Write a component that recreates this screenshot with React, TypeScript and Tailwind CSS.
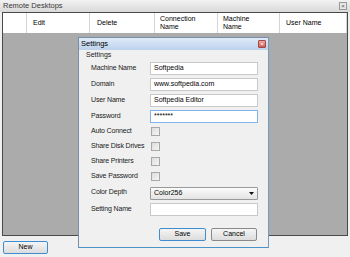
import React from "react";

const font = { fontFamily: '"Liberation Sans", Arial, sans-serif' };

function Input({ value, focused }: { value?: string; focused?: boolean }) {
  return (
    <div
      className={`w-[108px] h-[13px] bg-white border flex items-center px-[3px] text-[7px] text-black ${
        focused ? "border-[#7eb4ea]" : "border-[#c9c9c9]"
      }`}
    >
      {value}
    </div>
  );
}

function Check() {
  return (
    <div className="ml-[1px] w-[9px] h-[9px] border border-[#a8a8a8] bg-gradient-to-br from-[#dcdcdc] to-[#f6f6f6]" />
  );
}

function Row({
  label,
  h,
  children,
}: {
  label: string;
  h: string;
  children: React.ReactNode;
}) {
  return (
    <div className={`flex items-center ${h}`}>
      <div className="w-[71px] shrink-0 pl-[12px] text-[7px] tracking-[-0.15px] text-[#1a1a1a] whitespace-nowrap">
        {label}
      </div>
      {children}
    </div>
  );
}

export default function App() {
  return (
    <div className="relative w-[350px] h-[257px] bg-[#f0f0f0] overflow-hidden" style={font}>
      {/* Title bar */}
      <div className="h-[12px] flex items-center justify-between px-[3px] bg-gradient-to-b from-[#f2f2f2] to-[#d9d9d9]">
        <span className="text-[7.5px] text-[#3a3a3a]">Remote Desktops</span>
        <div className="w-[8px] h-[8px] border border-[#9a9a9a] bg-[#e6e6e6] flex items-center justify-center text-[6px] leading-none text-[#555]">
          ×
        </div>
      </div>
      {/* Grid */}
      <div className="mx-[2px] h-[224px] border border-[#4a4a4a] flex flex-col">
        <div className="h-[20px] bg-white flex text-[7px] text-black shrink-0">
          <div className="w-[24px] border-r border-[#d5d5d5]" />
          <div className="w-[63px] border-r border-[#d5d5d5] flex items-center pl-[6px]">Edit</div>
          <div className="w-[65px] border-r border-[#d5d5d5] flex items-center pl-[7px]">Delete</div>
          <div className="w-[63px] border-r border-[#d5d5d5] flex items-center pl-[5px] leading-[8px]">
            Connection
            <br />
            Name
          </div>
          <div className="w-[62px] border-r border-[#d5d5d5] flex items-center pl-[5px] leading-[8px]">
            Machine
            <br />
            Name
          </div>
          <div className="flex-1 border-r border-[#d5d5d5] flex items-center pl-[6px]">User Name</div>
        </div>
        <div className="flex-1 bg-[#ababab]" />
      </div>
      {/* New button */}
      <div className="mt-[5px] ml-[3px] w-[45px] h-[13px] rounded-[2px] border border-[#3d8ed0] bg-gradient-to-b from-[#f5f5f5] to-[#dcdcdc] flex items-center justify-center text-[7px] text-black">
        New
      </div>

      {/* Dialog */}
      <div className="absolute left-[78px] top-[37px] w-[191px] h-[211px] border border-[#7a8ea8] border-b-[#4a94c8] border-r-[#6f9cc4] bg-[#f0f0f0] flex flex-col">
        <div className="h-[12px] flex items-center justify-between pl-[2px] pr-[2px] bg-gradient-to-b from-[#dfeaf7] to-[#bcd2ec]">
          <span className="text-[7.5px] text-black">Settings</span>
          <div className="w-[8px] h-[8px] rounded-[1px] border border-[#a04a4a] bg-gradient-to-b from-[#f0a8a0] to-[#d2564a] flex items-center justify-center text-[6px] leading-none text-white">
            ×
          </div>
        </div>
        <div className="h-[10px] flex items-center pl-[7px] text-[7px] text-[#1a1a1a]">Settings</div>
        <Row label="Machine Name" h="h-[16px]">
          <Input value="Softpedia" />
        </Row>
        <Row label="Domain" h="h-[16px]">
          <Input value="www.softpedia.com" />
        </Row>
        <Row label="User Name" h="h-[16px]">
          <Input value="Softpedia Editor" />
        </Row>
        <Row label="Password" h="h-[16px]">
          <Input value="*******" focused />
        </Row>
        <Row label="Auto Connect" h="h-[15px]">
          <Check />
        </Row>
        <Row label="Share Disk Drives" h="h-[15px]">
          <Check />
        </Row>
        <Row label="Share Printers" h="h-[15px]">
          <Check />
        </Row>
        <Row label="Save Password" h="h-[15px]">
          <Check />
        </Row>
        <Row label="Color Depth" h="h-[17px]">
          <div className="w-[108px] h-[13px] mt-[1px] border border-[#9a9a9a] rounded-[1px] bg-gradient-to-b from-[#fbfbfb] to-[#e4e4e4] flex items-center justify-between pl-[3px] pr-[3px] text-[7px] text-black">
            <span>Color256</span>
            <svg width="5" height="3" viewBox="0 0 5 3">
              <path d="M0 0 L5 0 L2.5 3 Z" fill="#111" />
            </svg>
          </div>
        </Row>
        <Row label="Setting Name" h="h-[16px]">
          <Input />
        </Row>
        <div className="flex justify-end gap-[5px] pr-[11px] mt-[11px]">
          <div className="w-[47px] h-[13px] rounded-[2px] border border-[#3d8ed0] bg-gradient-to-b from-[#f5f5f5] to-[#dcdcdc] flex items-center justify-center text-[7px] text-black">
            Save
          </div>
          <div className="w-[46px] h-[13px] rounded-[2px] border border-[#8a8a8a] bg-gradient-to-b from-[#f5f5f5] to-[#dcdcdc] flex items-center justify-center text-[7px] text-black">
            Cancel
          </div>
        </div>
      </div>
    </div>
  );
}
